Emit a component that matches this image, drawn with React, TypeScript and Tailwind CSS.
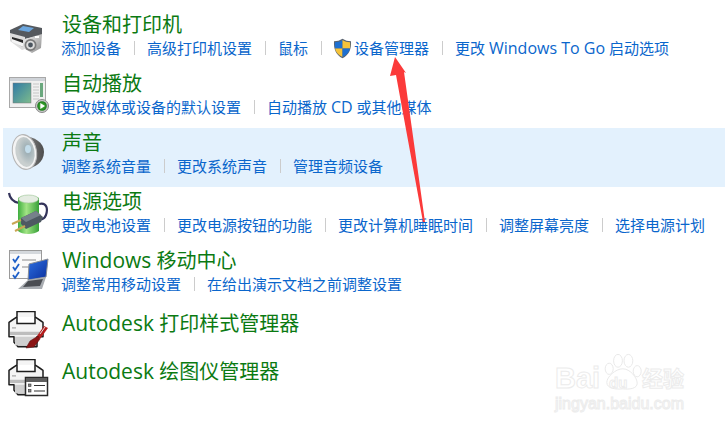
const font = 'font-["Open_Sans","Noto_Sans_CJK_SC",sans-serif]';

function DeviceIcon() {
  return (
    <svg width="44" height="44" viewBox="0 0 44 44">
      <defs>
        <linearGradient id="camBody" x1="0" y1="0" x2="1" y2="1">
          <stop offset="0" stopColor="#f2f2f2" />
          <stop offset="1" stopColor="#8c8c8c" />
        </linearGradient>
      </defs>
      <g transform="translate(0,2)">
        <path d="M4 14 L17 8 L36 12 L36 19 L19 23 L4 19Z" fill="#55595e" />
        <path d="M17 10 L28 12 L23 16 L12 14Z" fill="#6ba6de" />
        <path d="M4 17 L19 21 L19 33 L16 34 L4 25Z" fill="#dcdcdc" />
        <path d="M6 21 L17 24 L17 31 L6 25Z" fill="#2a2a2a" />
        <path d="M6 23 L17 27 L17 31 L6 26Z" fill="#f4f4f4" />
        <path d="M19 23 L36 18 L35 32 L26 37 L19 33Z" fill="url(#camBody)" />
        <circle cx="24.500" cy="29" r="6" fill="#7a7a7a" />
        <circle cx="24.500" cy="29" r="4.300" fill="#dcdcdc" />
        <circle cx="24.500" cy="29" r="2.400" fill="#4a545e" />
        <rect x="29" y="20" width="4" height="2" fill="#fff" />
      </g>
    </svg>
  );
}

function AutoPlayIcon() {
  return (
    <svg width="44" height="44" viewBox="0 0 44 44">
      <defs>
        <linearGradient id="apPane" x1="0" y1="0" x2="1" y2="1">
          <stop offset="0" stopColor="#2f7aa6" />
          <stop offset="1" stopColor="#7dbb8c" />
        </linearGradient>
        <radialGradient id="apBtn">
          <stop offset="0" stopColor="#4fc23c" />
          <stop offset="1" stopColor="#1d7a1d" />
        </radialGradient>
      </defs>
      <rect x="3.500" y="4.500" width="36" height="30" fill="#f0f0f0" stroke="#a8a8a8" />
      <rect x="4" y="5" width="35" height="3" fill="#cfd3d8" />
      <rect x="7" y="10" width="18" height="20" fill="url(#apPane)" stroke="#777" strokeWidth="0.500" />
      <path d="M27 11h6M27 14h6M27 17h6M27 20h6M27 23h6M27 26h6" stroke="#c6c6c6" strokeWidth="1" />
      <rect x="34" y="10" width="3" height="14" fill="#6aa87e" />
      <circle cx="36" cy="33" r="6.500" fill="#c9c9c9" stroke="#8a8a8a" />
      <circle cx="36" cy="33" r="4.800" fill="url(#apBtn)" />
      <path d="M34.300 30 L39 33 L34.300 36Z" fill="#fff" />
    </svg>
  );
}

function SpeakerIcon() {
  return (
    <svg width="44" height="44" viewBox="0 0 44 44">
      <defs>
        <linearGradient id="spBack" x1="0" y1="0" x2="1" y2="0">
          <stop offset="0" stopColor="#8a8a8a" />
          <stop offset="1" stopColor="#4c4c4c" />
        </linearGradient>
        <radialGradient id="spCone" cx="0.650" cy="0.450">
          <stop offset="0" stopColor="#d7e6ee" />
          <stop offset="0.250" stopColor="#9fb0b6" />
          <stop offset="1" stopColor="#c9cfcf" />
        </radialGradient>
      </defs>
      <path d="M18 4 C28 5 38 10 38 20 C38 31 28 35 22 37Z" fill="url(#spBack)" />
      <ellipse cx="18.500" cy="20" rx="12" ry="17.500" transform="rotate(-10 18.500 20)" fill="#f4f4f4" stroke="#b5b5b5" />
      <ellipse cx="19" cy="20" rx="9.500" ry="15" transform="rotate(-10 19 20)" fill="url(#spCone)" />
      <ellipse cx="22" cy="17" rx="3" ry="4" fill="#c3dcea" />
    </svg>
  );
}

function PowerIcon() {
  return (
    <svg width="44" height="46" viewBox="0 0 44 46">
      <defs>
        <linearGradient id="pwBat" x1="0" y1="0" x2="1" y2="0">
          <stop offset="0" stopColor="#3fae3f" />
          <stop offset="0.400" stopColor="#a2e485" />
          <stop offset="1" stopColor="#37a038" />
        </linearGradient>
      </defs>
      <path d="M3 2 C4 9 8 11 13 12" fill="none" stroke="#33335a" strokeWidth="2.200" />
      <path d="M33 13 C41 11 42 18 40 24 C38 29 35 29 31 28" fill="none" stroke="#33335a" strokeWidth="2.200" />
      <path d="M12 7 C16 4 28 4 33 7 L33 40 C28 44 16 44 12 40Z" fill="url(#pwBat)" />
      <ellipse cx="22.500" cy="8" rx="10" ry="4" fill="#e4ece1" stroke="#9cc596" strokeWidth="0.600" />
      <path d="M15 27 L30 20 L37 26 L35 31 L20 38 L15 33Z" fill="#4e5962" />
      <path d="M15 27 L30 20 L35 24 L20 31Z" fill="#76818a" />
      <path d="M15 29 L6 33" stroke="#c9a654" strokeWidth="2" />
      <path d="M19 35 L9 40" stroke="#c9a654" strokeWidth="2" />
    </svg>
  );
}

function MobilityIcon() {
  return (
    <svg width="44" height="44" viewBox="0 0 44 44">
      <defs>
        <linearGradient id="mbScreen" x1="0" y1="0" x2="1" y2="1">
          <stop offset="0" stopColor="#2d6fe0" />
          <stop offset="1" stopColor="#0b2f9e" />
        </linearGradient>
      </defs>
      <g transform="translate(0,-4)">
        <rect x="3.500" y="4.500" width="32" height="28" fill="#fafafa" stroke="#9a9a9a" />
        <rect x="4" y="5" width="31" height="3" fill="#d4d8dc" />
        <path d="M7 13 L9 16 L13 10M7 21 L9 24 L13 18M7 29 L9 32 L13 26" fill="none" stroke="#1d5fc8" strokeWidth="1.800" />
        <path d="M16 14h14M16 21h10" stroke="#8a8a8a" strokeWidth="1" />
        <path d="M23 18 L42 13 L40 31 L22 34Z" fill="url(#mbScreen)" stroke="#8a8f96" strokeWidth="1" />
        <path d="M22 34 L40 31 L36 43 L12 43Z" fill="#a9adb2" />
        <path d="M22 35 L37 33 L34 40 L17 41Z" fill="#4a4d52" />
      </g>
    </svg>
  );
}

function PrinterBase() {
  return (
    <g transform="translate(0,-4) scale(1,1.100)">
      <path d="M11 9 L11 4 L29 4 L29 9 L34 12 L37 14 L37 27 L31 27 L31 36 L12 36 L8 32 L8 27 L3 27 L3 14 L6 12Z" fill="#f4f4f4" stroke="#1d1d1d" strokeWidth="1.500" strokeLinejoin="round" />
      <path d="M11 9 L11 15 L29 15 L29 9" fill="#fff" stroke="#1d1d1d" strokeWidth="1.500" />
      <path d="M4 24 H36" stroke="#bdbdbd" strokeWidth="3" />
      <rect x="9" y="27" width="21" height="8" fill="#cfcfcf" />
      <path d="M6 19h4" stroke="#9d9d9d" strokeWidth="1" />
    </g>
  );
}

function PrintStyleIcon() {
  return (
    <svg width="44" height="44" viewBox="0 0 44 44">
      <PrinterBase />
      <path d="M42 17 L38 15 L31 25 L34 28Z" fill="#b51d1d" />
      <path d="M32 25 L24 30 L20 37 L28 36 L34 28Z" fill="#8a1414" stroke="#511" strokeWidth="0.500" />
      <path d="M39 16 L34 23" stroke="#ddd" strokeWidth="1" />
    </svg>
  );
}

function PlotterIcon() {
  return (
    <svg width="44" height="44" viewBox="0 0 44 44">
      <PrinterBase />
      <rect x="19.500" y="18.500" width="22" height="18" fill="#fff" stroke="#2a2a2a" strokeWidth="1.500" />
      <rect x="20" y="19" width="21" height="4" fill="#5e5e5e" />
      <rect x="22.500" y="25" width="2.500" height="2.500" fill="#888" stroke="#333" strokeWidth="0.600" />
      <rect x="22.500" y="30.500" width="2.500" height="2.500" fill="#888" stroke="#333" strokeWidth="0.600" />
      <path d="M28 26.500h11M28 32h11" stroke="#333" strokeWidth="1.200" />
    </svg>
  );
}

function Shield() {
  return (
    <svg width="19" height="21" viewBox="0 0 19 21" className="-ml-px mr-[2px] shrink-0">
      <path d="M9.500 0.800 C12 2.500 15 3.300 18 3.300 C18.500 11 16 17 9.500 20.300 C3 17 0.500 11 1 3.300 C4 3.300 7 2.500 9.500 0.800Z" fill="#5a6470" />
      <path d="M9.500 2 V10.500 H2 C1.800 8 1.800 6 2 4.300 C4.800 4.200 7.300 3.400 9.500 2Z" fill="#1d6fd0" />
      <path d="M9.500 2 C11.700 3.400 14.200 4.200 17 4.300 C17.200 6 17.200 8 17 10.500 H9.500Z" fill="#f5c33a" />
      <path d="M2 10.500 H9.500 V19 C5 16.700 2.700 14 2 10.500Z" fill="#f5c33a" />
      <path d="M9.500 10.500 H17 C16.300 14 14 16.700 9.500 19Z" fill="#1d6fd0" />
    </svg>
  );
}

// латиница в оригинале чуть крупнее иероглифов
function Mixed({ text, latin }: { text: string; latin: string }) {
  const parts = text.split(/([A-Za-z][A-Za-z ]*[A-Za-z])/);
  return (
    <>
      {parts.map((part, i) =>
        i % 2 === 1 ? (
          <span key={i} className={latin}>
            {part}
          </span>
        ) : (
          part
        ),
      )}
    </>
  );
}

function Links({ items }: { items: { label: string; shield?: boolean }[] }) {
  return (
    <div className="flex items-center h-[20px] -ml-px text-[15px] leading-[20px] text-[#0a66cc] whitespace-nowrap">
      {items.map((item, i) => (
        <div key={item.label} className="flex items-center">
          {i > 0 && <span className="w-px h-[14px] bg-[#cccccc] ml-[13px] mr-[12px]" />}
          {item.shield && <Shield />}
          <span>
            <Mixed text={item.label} latin="text-[16px]" />
          </span>
        </div>
      ))}
    </div>
  );
}

function Row({ icon, title, links, active, latinTitle }: { icon: React.ReactNode; title: string; links: { label: string; shield?: boolean }[]; active?: boolean; latinTitle?: boolean }) {
  return (
    <div className={`flex h-[59px] ml-[3px] pl-[3px] ${active ? "bg-[#e3f1fd]" : ""}`}>
      <div className="w-[44px] mr-[12px] pt-[4px] shrink-0">{icon}</div>
      <div>
        <div className={`h-[28px] text-[20px] text-[#0b7a12] whitespace-nowrap ${latinTitle ? "leading-[28px]" : "leading-[30px]"}`}>
          <Mixed text={title} latin="text-[21px]" />
        </div>
        <Links items={links} />
      </div>
    </div>
  );
}

function SmallRow({ icon, title }: { icon: React.ReactNode; title: string }) {
  return (
    <div className="flex h-[48px] ml-[3px] pl-[3px]">
      <div className="w-[44px] mr-[12px] pt-[2px] shrink-0">{icon}</div>
      <div className="h-[28px] text-[20px] leading-[28px] text-[#0b7a12] whitespace-nowrap">
        <Mixed text={title} latin="text-[21px]" />
      </div>
    </div>
  );
}

function Watermark() {
  const outline = "text-transparent [-webkit-text-stroke:1px_#ececec]";
  return (
    <div className="absolute left-[555px] top-[348px] w-[135px] h-[66px]">
      <span className={`absolute left-0 top-[15px] text-[29px] leading-[30px] font-bold font-["Liberation_Sans",sans-serif] ${outline}`}>Bai</span>
      <svg width="40" height="42" viewBox="0 0 50 50" className="absolute left-[47px] top-[3px]">
        <g fill="#fff" stroke="#e8e8e8" strokeWidth="1.200">
          <ellipse cx="20" cy="11" rx="5.500" ry="8" />
          <ellipse cx="33" cy="11" rx="5.500" ry="8" />
          <ellipse cx="9" cy="21" rx="5" ry="7" />
          <ellipse cx="44" cy="24" rx="5" ry="7" />
          <path d="M26 21 C35 21 44 32 44 39 C44 46 34 47 26 46 C18 47 6 46 6 38 C6 31 17 21 26 21Z" />
        </g>
      </svg>
      <span className={`absolute left-[54px] top-[27px] text-[15px] leading-[16px] font-bold font-["Liberation_Sans",sans-serif] ${outline}`}>du</span>
      <span className={`absolute left-[87px] top-[18px] text-[21px] leading-[24px] font-bold ${outline}`}>经验</span>
      <span className={`absolute left-0 top-[47px] text-[16px] leading-[18px] font-["Liberation_Sans",sans-serif] ${outline}`}>jingyan.baidu.com</span>
    </div>
  );
}

export default function App() {
  return (
    <div className={`relative w-[725px] h-[426px] bg-white overflow-hidden pt-[10px] ${font}`}>
      <Row
        icon={<DeviceIcon />}
        title="设备和打印机"
        links={[
          { label: "添加设备" },
          { label: "高级打印机设置" },
          { label: "鼠标" },
          { label: "设备管理器", shield: true },
          { label: "更改 Windows To Go 启动选项" },
        ]}
      />
      <Row
        icon={<AutoPlayIcon />}
        title="自动播放"
        links={[{ label: "更改媒体或设备的默认设置" }, { label: "自动播放 CD 或其他媒体" }]}
      />
      <Row
        active
        icon={<SpeakerIcon />}
        title="声音"
        links={[{ label: "调整系统音量" }, { label: "更改系统声音" }, { label: "管理音频设备" }]}
      />
      <Row
        icon={<PowerIcon />}
        title="电源选项"
        links={[
          { label: "更改电池设置" },
          { label: "更改电源按钮的功能" },
          { label: "更改计算机睡眠时间" },
          { label: "调整屏幕亮度" },
          { label: "选择电源计划" },
        ]}
      />
      <Row
        latinTitle
        icon={<MobilityIcon />}
        title="Windows 移动中心"
        links={[{ label: "调整常用移动设置" }, { label: "在给出演示文档之前调整设置" }]}
      />
      <div className="mt-[4px]">
        <SmallRow icon={<PrintStyleIcon />} title="Autodesk 打印样式管理器" />
        <SmallRow icon={<PlotterIcon />} title="Autodesk 绘图仪管理器" />
      </div>
      <Watermark />
      {/* 红色箭头 */}
      <svg width="725" height="426" viewBox="0 0 725 426" className="absolute left-0 top-0 pointer-events-none">
        <path d="M395 57 L406 73 L404 72 L425 222 L423 222 L396 75 L390 76Z" fill="#fb3a3a" />
      </svg>
    </div>
  );
}
